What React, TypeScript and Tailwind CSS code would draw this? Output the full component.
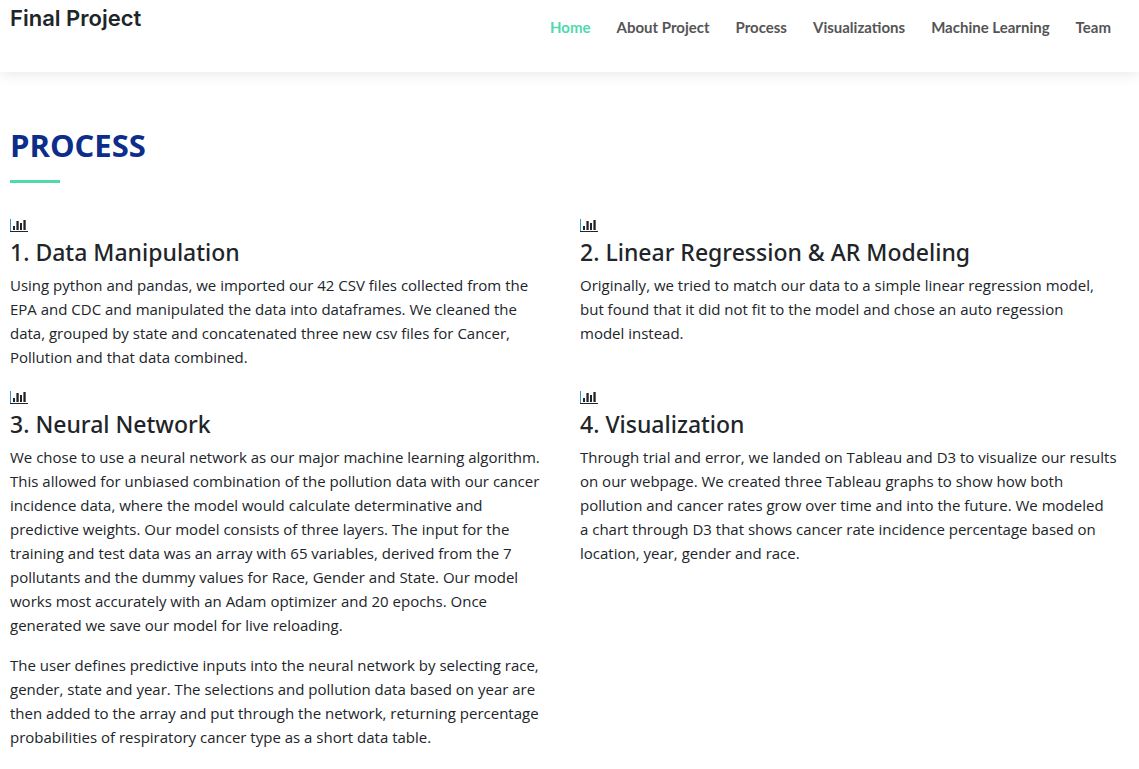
import { Fragment } from "react";

const nav = ["Home", "About Project", "Process", "Visualizations", "Machine Learning", "Team"];

const steps: { title: string; paragraphs: string[][] }[] = [
  {
    title: "1. Data Manipulation",
    paragraphs: [
      [
        "Using python and pandas, we imported our 42 CSV files collected from the",
        "EPA and CDC and manipulated the data into dataframes. We cleaned the",
        "data, grouped by state and concatenated three new csv files for Cancer,",
        "Pollution and that data combined.",
      ],
    ],
  },
  {
    title: "2. Linear Regression & AR Modeling",
    paragraphs: [
      [
        "Originally, we tried to match our data to a simple linear regression model,",
        "but found that it did not fit to the model and chose an auto regession",
        "model instead.",
      ],
    ],
  },
  {
    title: "3. Neural Network",
    paragraphs: [
      [
        "We chose to use a neural network as our major machine learning algorithm.",
        "This allowed for unbiased combination of the pollution data with our cancer",
        "incidence data, where the model would calculate determinative and",
        "predictive weights. Our model consists of three layers. The input for the",
        "training and test data was an array with 65 variables, derived from the 7",
        "pollutants and the dummy values for Race, Gender and State. Our model",
        "works most accurately with an Adam optimizer and 20 epochs. Once",
        "generated we save our model for live reloading.",
      ],
      [
        "The user defines predictive inputs into the neural network by selecting race,",
        "gender, state and year. The selections and pollution data based on year are",
        "then added to the array and put through the network, returning percentage",
        "probabilities of respiratory cancer type as a short data table.",
      ],
    ],
  },
  {
    title: "4. Visualization",
    paragraphs: [
      [
        "Through trial and error, we landed on Tableau and D3 to visualize our results",
        "on our webpage. We created three Tableau graphs to show how both",
        "pollution and cancer rates grow over time and into the future. We modeled",
        "a chart through D3 that shows cancer rate incidence percentage based on",
        "location, year, gender and race.",
      ],
    ],
  },
];

function BarChartIcon() {
  return (
    <svg aria-hidden="true" viewBox="0 0 18 14" className="block h-[14px] w-[18px]">
      <path d="M0 0h1v12H0z" fill="#3a8fc9" />
      <path d="M0 12h18v1H0zM3 7h2v4H3zM6.4 2h2.3v9H6.4zM10 4h2v7h-2zM13.4 1h2.3v10h-2.3z" fill="#212529" />
    </svg>
  );
}

export default function App() {
  return (
    <div className="min-h-screen overflow-x-hidden bg-white font-['Open_Sans','Noto_Sans',sans-serif] text-[#212529]">
      <header className="flex h-[72px] items-start justify-between pr-7 pl-[10px] shadow-[0_0_15px_rgba(0,0,0,0.12)]">
        <h1 className="pt-[3px] font-['Inter',sans-serif] text-[22px] leading-[30px] font-semibold whitespace-nowrap">Final Project</h1>
        <nav className="flex gap-[26px] pt-[17px] font-['Lato',sans-serif] text-[15px] leading-5 font-bold whitespace-nowrap text-[#555555]">
          {nav.map((item, i) => (
            <a key={item} href="#" className={i === 0 ? "text-[#50d8af]" : ""}>
              {item}
            </a>
          ))}
        </nav>
      </header>
      <main className="pt-[54px] pr-[19px] pb-4 pl-[10px]">
        <h2 className="text-[31px] leading-[38px] font-bold text-[#0c2e8a]">PROCESS</h2>
        <div className="mt-4 h-[3px] w-[50px] bg-[#50d8af]" />
        <div className="mt-[36px] grid grid-cols-2 gap-x-[30px] gap-y-[6px]">
          {steps.map((step) => (
            <section key={step.title}>
              <BarChartIcon />
              <h3 className="mt-[5px] mb-[7px] font-['Noto_Sans',sans-serif] text-[23px] leading-7 font-medium">{step.title}</h3>
              {step.paragraphs.map((lines) => (
                <p key={lines[0]} className="mb-4 text-[15px] leading-6 whitespace-nowrap">
                  {lines.map((line, i) => (
                    <Fragment key={line}>
                      {i > 0 && <br />}
                      {line}
                    </Fragment>
                  ))}
                </p>
              ))}
            </section>
          ))}
        </div>
      </main>
    </div>
  );
}
